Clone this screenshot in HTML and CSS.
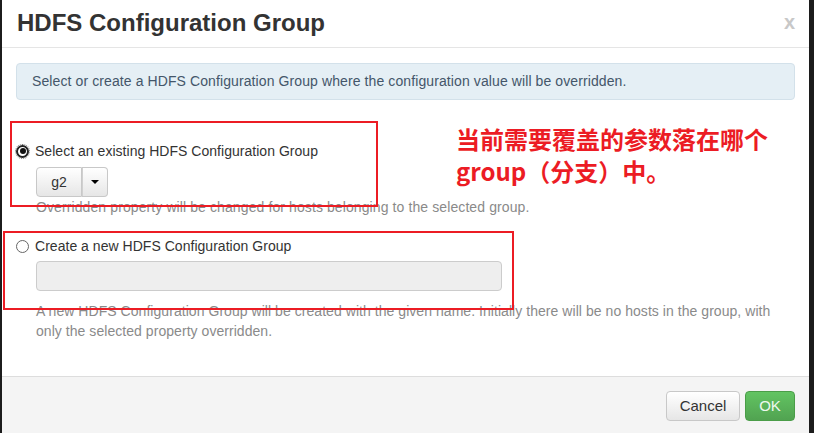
FILE: index.html
```
<!DOCTYPE html>
<html>
<head>
<meta charset="utf-8">
<link rel="stylesheet" href="styles.css">
</head>
<body>
<div class="backdrop">
  <div class="modal">
    <div class="modal-header">
      <h3 class="title">HDFS Configuration Group</h3>
      <span class="close">x</span>
    </div>
    <div class="modal-body">
      <div class="alert">Select or create a HDFS Configuration Group where the configuration value will be overridden.</div>
      <div class="option option-first">
        <label class="radio-line"><span class="radio checked"></span>Select an existing HDFS Configuration Group</label>
        <div class="btn-group">
          <span class="btn btn-value">g2</span><span class="btn btn-caret"><span class="caret"></span></span>
        </div>
        <div class="help">Overridden property will be changed for hosts belonging to the selected group.</div>
      </div>
      <div class="option option-second">
        <label class="radio-line"><span class="radio"></span>Create a new HDFS Configuration Group</label>
        <div class="input"></div>
        <div class="help help-wide">A new HDFS Configuration Group will be created with the given name. Initially there will be no hosts in the group, with only the selected property overridden.</div>
      </div>
    </div>
    <div class="modal-footer">
      <span class="btn btn-cancel">Cancel</span>
      <span class="btn btn-ok">OK</span>
    </div>
    <div class="mark mark-one"></div>
    <div class="mark mark-two"></div>
    <div class="note">当前需要覆盖的参数落在哪个<br>group（分支）中。</div>
  </div>
</div>
</body>
</html>
```
FILE: styles.css
```
html, body {
  margin: 0;
  padding: 0;
}
body {
  background: #1c1c1c;
  font-family: "Liberation Sans", Arial, sans-serif;
  font-size: 14px;
  line-height: 20px;
  color: #333;
}
.backdrop {
  width: 814px;
  height: 433px;
  overflow: hidden;
  padding-left: 2px;
  box-sizing: border-box;
}
.modal {
  position: relative;
  width: 807px;
  height: 433px;
  background: #fff;
  display: flex;
  flex-direction: column;
}
.modal-header {
  height: 47px;
  border-bottom: 1px solid #e5e5e5;
  padding: 0 15px;
  display: flex;
  align-items: center;
  justify-content: space-between;
}
.title {
  margin: 0;
  font-size: 24px;
  font-weight: bold;
  line-height: 30px;
  color: #333;
  padding-bottom: 1px;
}
.close {
  font-size: 20px;
  font-weight: bold;
  color: #c8c8c8;
  line-height: 20px;
  margin-right: -1px;
  margin-top: -4px;
}
.modal-body {
  flex: 1;
  padding: 15px 14px 0 14px;
}
.alert {
  background: #e5eff5;
  border: 1px solid #d3e1ea;
  border-radius: 4px;
  padding: 8px 15px;
  line-height: 19px;
  color: #44566a;
  letter-spacing: 0.1px;
}
.option-first {
  margin-top: 41px;
}
.option-second {
  margin-top: 19px;
}
.radio-line {
  display: flex;
  align-items: center;
  height: 20px;
  letter-spacing: 0.03px;
}
.radio {
  width: 11px;
  height: 11px;
  border: 1px solid #666;
  border-radius: 50%;
  margin-right: 6px;
  position: relative;
  flex: none;
  background: #fff;
}
.radio.checked {
  border: 2px solid #222;
  width: 9px;
  height: 9px;
  outline: 1px dotted #777;
  outline-offset: 0;
}
.radio.checked::after {
  content: "";
  position: absolute;
  left: 1.5px;
  top: 1.5px;
  width: 6px;
  height: 6px;
  border-radius: 50%;
  background: #111;
}
.btn-group {
  display: flex;
  margin: 6px 0 0 20px;
}
.btn {
  display: inline-flex;
  align-items: center;
  justify-content: center;
  height: 28px;
  border: 1px solid #c8c8c8;
  background: linear-gradient(#ffffff, #e6e6e6);
  color: #333;
  box-sizing: content-box;
}
.btn-value {
  width: 44px;
  border-radius: 4px 0 0 4px;
}
.btn-caret {
  width: 25px;
  border-left: none;
  border-radius: 0 4px 4px 0;
  box-shadow: inset 1px 0 0 #d0d0d0;
}
.caret {
  width: 0;
  height: 0;
  border-top: 4px solid #000;
  border-left: 4px solid transparent;
  border-right: 4px solid transparent;
}
.help {
  margin-left: 20px;
  color: #8a8a8a;
  letter-spacing: 0.1px;
}
.input {
  margin: 5px 0 10px 20px;
  width: 464px;
  height: 28px;
  background: #eee;
  border: 1px solid #ccc;
  border-radius: 4px;
}
.help-wide {
  width: 740px;
  letter-spacing: 0.05px;
}
.modal-footer {
  height: 57px;
  border-top: 1px solid #ddd;
  background: #f4f4f4;
  display: flex;
  justify-content: flex-end;
  align-items: flex-start;
  gap: 5px;
  padding: 14px 14px 0 0;
  box-sizing: border-box;
}
.btn-cancel {
  width: 72px;
  border-radius: 4px;
  font-size: 15px;
}
.btn-ok {
  width: 48px;
  border-radius: 4px;
  border-color: #4a9d48;
  background: linear-gradient(#62c462, #51a351);
  color: #eef8ee;
  font-size: 15px;
}
.mark {
  position: absolute;
  border: 2px solid #ec1c24;
}
.mark-one {
  left: 8px;
  top: 121px;
  width: 364px;
  height: 82px;
}
.mark-two {
  left: 1px;
  top: 231px;
  width: 507px;
  height: 75px;
}
.note {
  position: absolute;
  left: 454px;
  top: 123px;
  font-family: "Noto Sans CJK SC", sans-serif;
  font-weight: bold;
  font-size: 24px;
  line-height: 32px;
  color: #ec1c24;
}
```
